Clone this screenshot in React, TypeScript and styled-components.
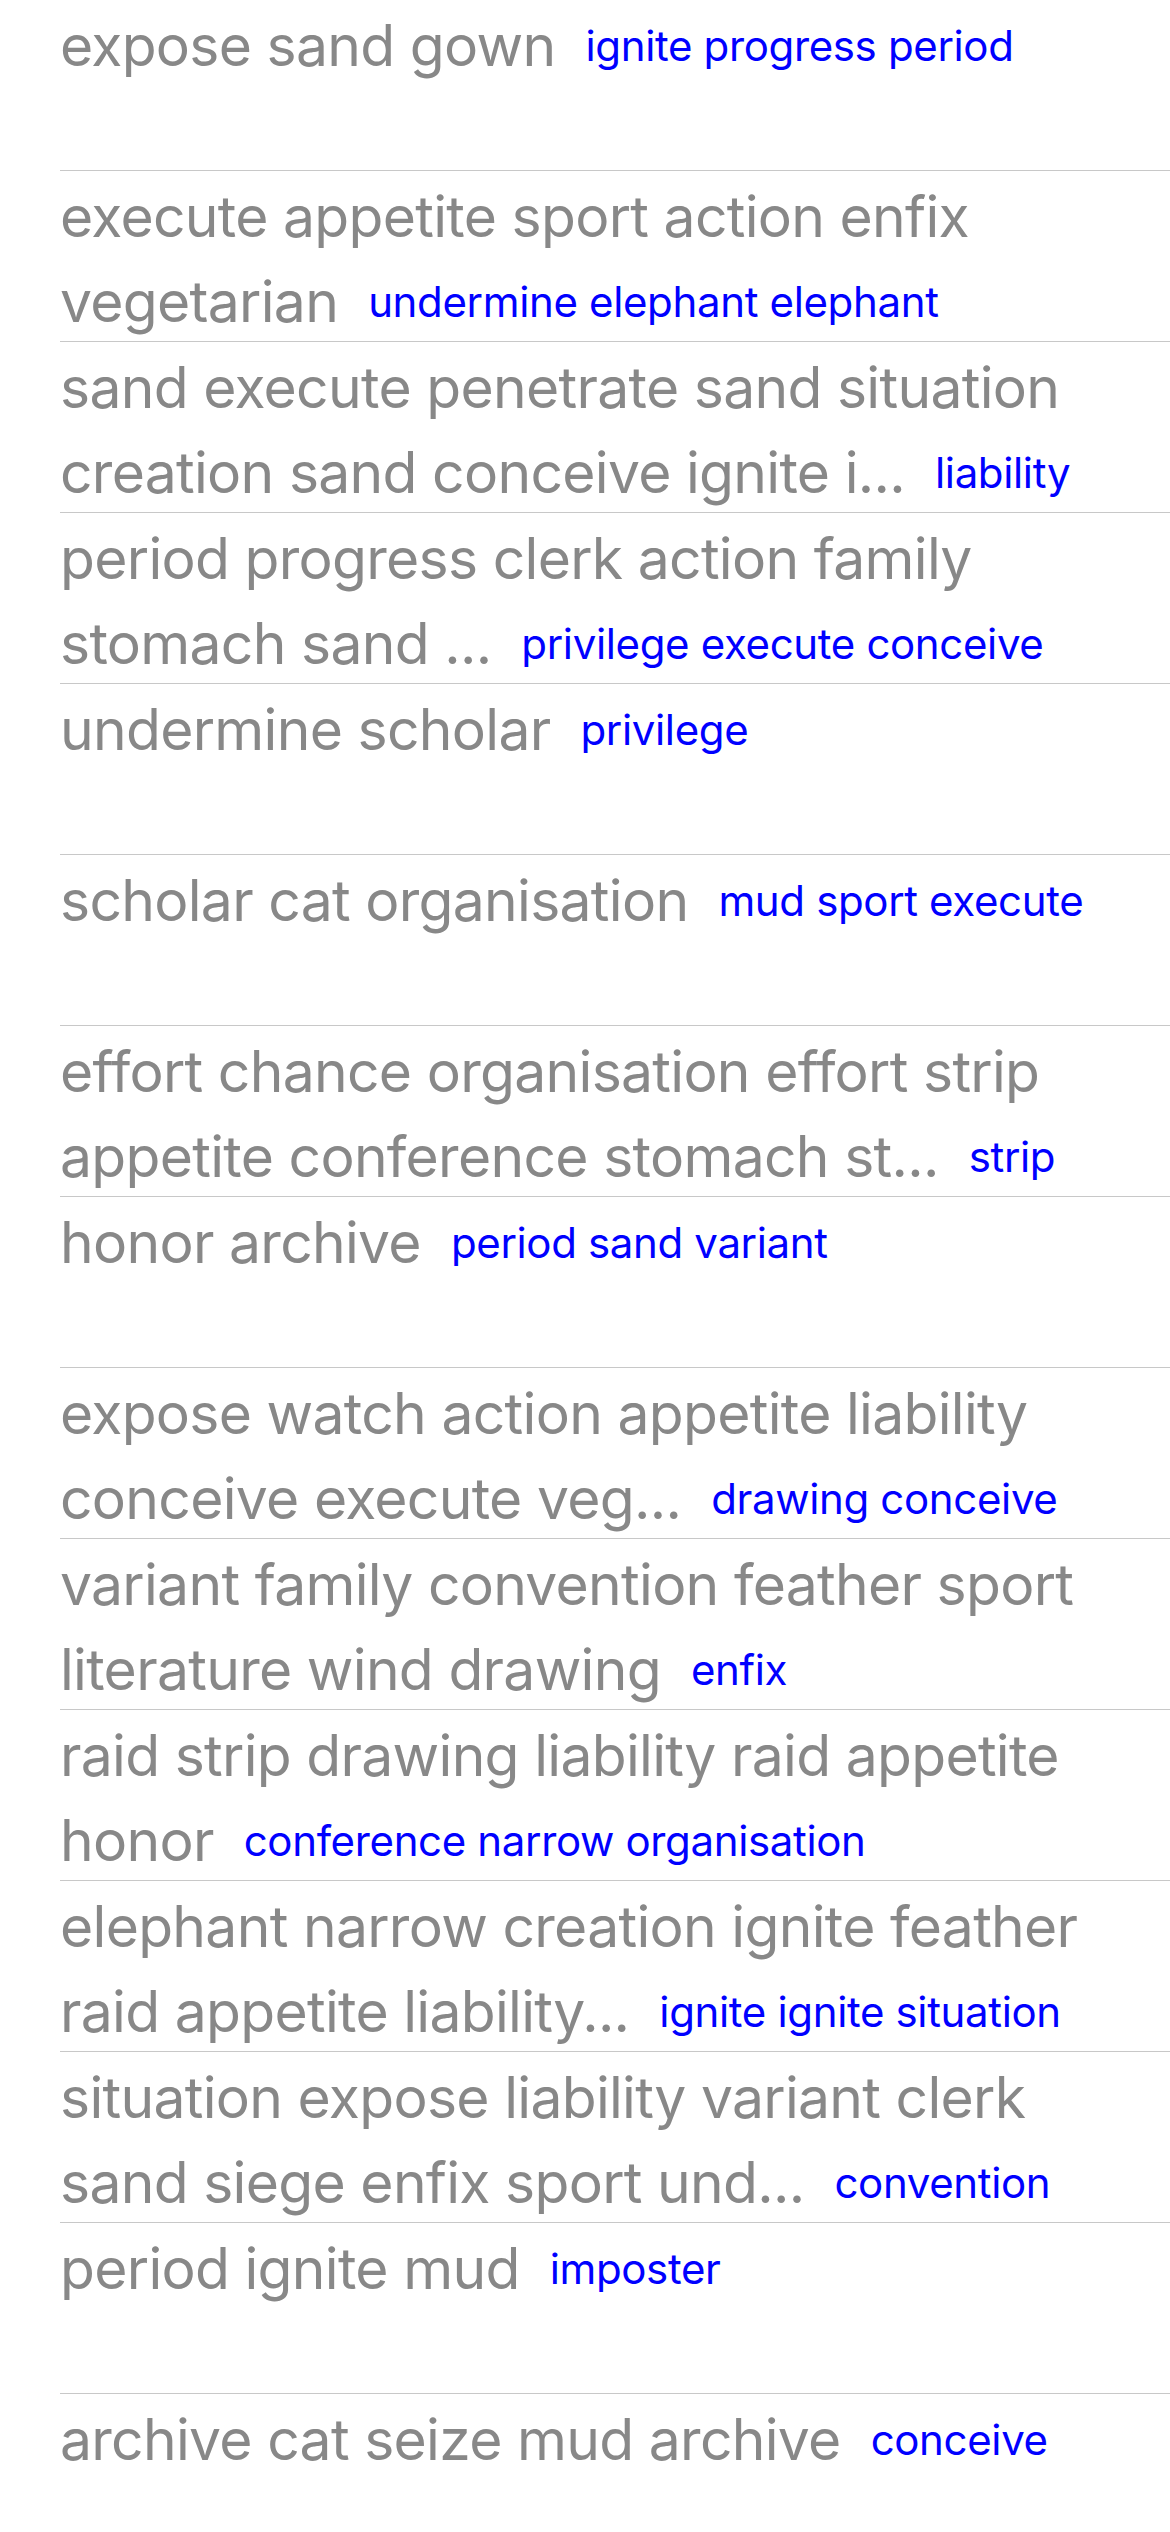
import styled, { createGlobalStyle } from "styled-components";

const GlobalStyle = createGlobalStyle`
  html, body {
    margin: 0;
    padding: 0;
    background: #ffffff;
  }
  body {
    font-family: "Inter", "Liberation Sans", sans-serif;
    -webkit-font-smoothing: antialiased;
  }
`;

const items = [
  { lines: ["expose sand gown"], tag: "ignite progress period" },
  { lines: ["execute appetite sport action enfix", "vegetarian"], tag: "undermine elephant elephant" },
  { lines: ["sand execute penetrate sand situation", "creation sand conceive ignite i..."], tag: "liability" },
  { lines: ["period progress clerk action family", "stomach sand ..."], tag: "privilege execute conceive" },
  { lines: ["undermine scholar"], tag: "privilege" },
  { lines: ["scholar cat organisation"], tag: "mud sport execute" },
  { lines: ["effort chance organisation effort strip", "appetite conference stomach st..."], tag: "strip" },
  { lines: ["honor archive"], tag: "period sand variant" },
  { lines: ["expose watch action appetite liability", "conceive execute veg..."], tag: "drawing conceive" },
  { lines: ["variant family convention feather sport", "literature wind drawing"], tag: "enfix" },
  { lines: ["raid strip drawing liability raid appetite", "honor"], tag: "conference narrow organisation" },
  { lines: ["elephant narrow creation ignite feather", "raid appetite liability..."], tag: "ignite ignite situation" },
  { lines: ["situation expose liability variant clerk", "sand siege enfix sport und..."], tag: "convention" },
  { lines: ["period ignite mud"], tag: "imposter" },
  { lines: ["archive cat seize mud archive"], tag: "conceive" },
];

const App = () => {
  return (
    <>
      <GlobalStyle />
      <List>
        {items.map(({ lines, tag }, i) => (
          <Row key={`row-${i}`}>
            {lines.map((text, j) => (
              <Line key={`line-${j}`}>
                <Title>{text}</Title>
                {j === lines.length - 1 && <Tag>{tag}</Tag>}
              </Line>
            ))}
          </Row>
        ))}
      </List>
    </>
  );
};

const List = styled.div`
  display: flex;
  flex-direction: column;
  width: 1170px;
  height: 2532px;
  overflow: hidden;
`;

const Row = styled.div`
  display: flex;
  flex-direction: column;
  flex-shrink: 0;
  box-sizing: border-box;
  height: 171px;
  margin-left: 60px;
  padding-top: 3px;
  border-bottom: 1px solid #c8c8c8;
`;

const Line = styled.div`
  display: flex;
  align-items: center;
  height: 85px;
  white-space: nowrap;
`;

const Title = styled.span`
  font-size: 57px;
  line-height: 85px;
  letter-spacing: -0.7px;
  color: #888888;
`;

const Tag = styled.span`
  margin-left: 30px;
  font-size: 42px;
  letter-spacing: -0.35px;
  color: #0000ff;
`;

export default App;
